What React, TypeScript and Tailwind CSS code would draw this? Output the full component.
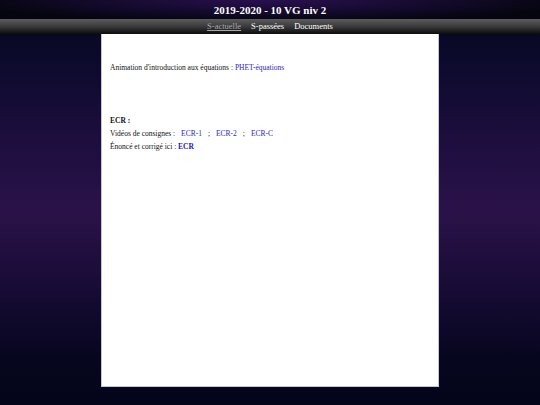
import React from 'react';

export default function App() {
  return (
    <div className="min-h-[405px] w-full bg-[linear-gradient(to_bottom,#06061a_0px,#0c0a2c_60px,#1f0e40_150px,#2a1248_210px,#1a0c38_280px,#06061e_360px,#04041a_405px)] font-['Liberation_Serif',serif]">
      <div className="h-[19px] flex items-center justify-center bg-[radial-gradient(ellipse_at_50%_0%,#2a1050_0%,#140a2c_45%,#05050f_80%)]">
        <h1 className="text-[11px] font-bold text-white leading-none pt-[2px]">2019-2020 - 10 VG niv 2</h1>
      </div>
      <nav className="h-[15px] flex items-center justify-center gap-[10px] bg-[linear-gradient(to_bottom,#5c5c5c,#3a3a3a_50%,#0c0c0c)] text-[8.5px] leading-none">
        <a className="text-[#a8a8a8] underline">S-actuelle</a>
        <a className="text-white">S-passées</a>
        <a className="text-white">Documents</a>
      </nav>
      <div className="flex justify-center">
        <main className="w-[338px] h-[353px] bg-white border border-t-0 border-[#c4c4dc] pl-[8px] pr-[9px] pt-[30px] text-[7.5px] leading-none text-[#111]">
          <p>
            Animation d'introduction aux équations : <a className="text-[#2828c8]">PHET-équations</a>
          </p>
          <p className="mt-[45px] font-bold">ECR :</p>
          <p className="mt-[6px]">
            Vidéos de consignes : <span className="ml-[4px] text-[#2828c8]">ECR-1</span>
            <span className="mx-[6px]">;</span>
            <span className="text-[#2828c8]">ECR-2</span>
            <span className="mx-[6px]">;</span>
            <span className="text-[#2828c8]">ECR-C</span>
          </p>
          <p className="mt-[5px]">
            Énoncé et corrigé ici : <span className="font-bold text-[#1818c0]">ECR</span>
          </p>
        </main>
      </div>
    </div>
  );
}
